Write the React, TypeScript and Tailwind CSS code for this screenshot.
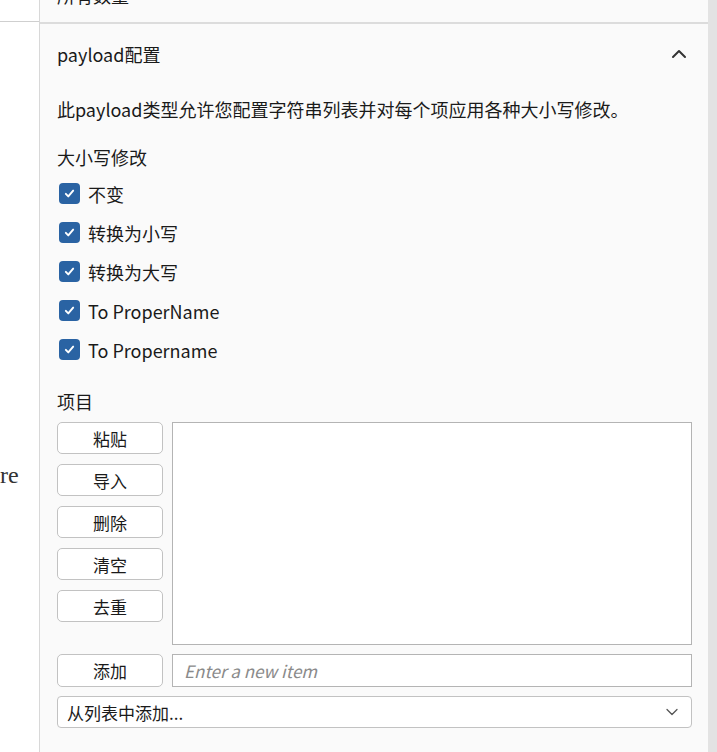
import { ChevronDown, ChevronUp } from 'lucide-react'

const cases = ['不变', '转换为小写', '转换为大写', 'To ProperName', 'To Propername']
const actions = ['粘贴', '导入', '删除', '清空', '去重']

function Check() {
  return (
    <span className="flex h-[21px] w-[21px] shrink-0 items-center justify-center rounded-[4px] bg-[#2a63a3]">
      <svg className="h-[13px] w-[13px]" viewBox="0 0 16 16" fill="none" stroke="white" strokeWidth={2.4} strokeLinecap="round" strokeLinejoin="round">
        <path d="M3.5 8.5l3 3 6-7" />
      </svg>
    </span>
  )
}

export default function App() {
  return (
    <div
      className="flex h-[752px] w-[717px] overflow-hidden bg-white text-[18px] text-[#1a1a1a]"
      style={{ fontFamily: '"Noto Sans CJK SC", "Noto Sans", sans-serif' }}
    >
      {/* left page edge */}
      <div className="flex w-[40px] shrink-0 flex-col border-r border-[#d8d8d8] bg-white">
        <div className="mt-[21px] h-px w-full bg-[#cfcfcf]" />
        <div
          className="mt-[439px] text-[24px] leading-[28px] text-[#333]"
          style={{ fontFamily: '"Liberation Serif", serif' }}
        >
          re
        </div>
      </div>

      {/* config panel */}
      <div className="flex w-[668px] shrink-0 flex-col bg-[#fafafa]">
        <div className="h-[24px] overflow-hidden border-b-2 border-[#dcdcdc] pl-[17px]">
          <div className="-mt-[17px] leading-[24px]">所有数量</div>
        </div>

        <div className="flex h-[60px] items-center justify-between pl-[17px] pr-[17px]">
          <span className="leading-[24px]">payload配置</span>
          <ChevronUp className="h-[24px] w-[24px] text-[#333]" strokeWidth={2} />
        </div>

        <div className="pl-[17px] pr-[16px]">
          <p className="mt-[13px] leading-[24px]">此payload类型允许您配置字符串列表并对每个项应用各种大小写修改。</p>
          <div className="mt-[24px] leading-[24px]">大小写修改</div>

          <div className="mt-[5px] flex flex-col">
            {cases.map((c) => (
              <label key={c} className="flex h-[39px] items-center gap-[8px] pl-[2px]">
                <Check />
                <span className="leading-[24px]">{c}</span>
              </label>
            ))}
          </div>

          <div className="mt-[20px] leading-[24px]">项目</div>

          <div className="mt-[9px] flex gap-[9px]">
            <div className="flex w-[106px] shrink-0 flex-col gap-[10px]">
              {actions.map((a) => (
                <button
                  key={a}
                  className="h-[32px] rounded-[5px] border border-[#c2c2c2] bg-white text-[17px] leading-none"
                >
                  {a}
                </button>
              ))}
            </div>
            <div className="h-[223px] flex-1 border border-[#b4b4b4] bg-white" />
          </div>

          <div className="mt-[9px] flex gap-[9px]">
            <button className="h-[33px] w-[106px] shrink-0 rounded-[5px] border border-[#c2c2c2] bg-white text-[17px] leading-none">
              添加
            </button>
            <input
              className="h-[33px] flex-1 border border-[#b4b4b4] bg-white px-[11px] text-[17px] italic outline-none placeholder:text-[#8a8a8a]"
              placeholder="Enter a new item"
            />
          </div>

          <div className="mt-[9px] flex h-[32px] items-center justify-between rounded-[4px] border border-[#c2c2c2] bg-white pl-[9px] pr-[9px]">
            <span className="text-[17px] leading-none">从列表中添加...</span>
            <ChevronDown className="h-[20px] w-[20px] text-[#555]" strokeWidth={1.5} />
          </div>
        </div>
      </div>

      <div className="flex-1 bg-[#e3e3e3]" />
    </div>
  )
}
